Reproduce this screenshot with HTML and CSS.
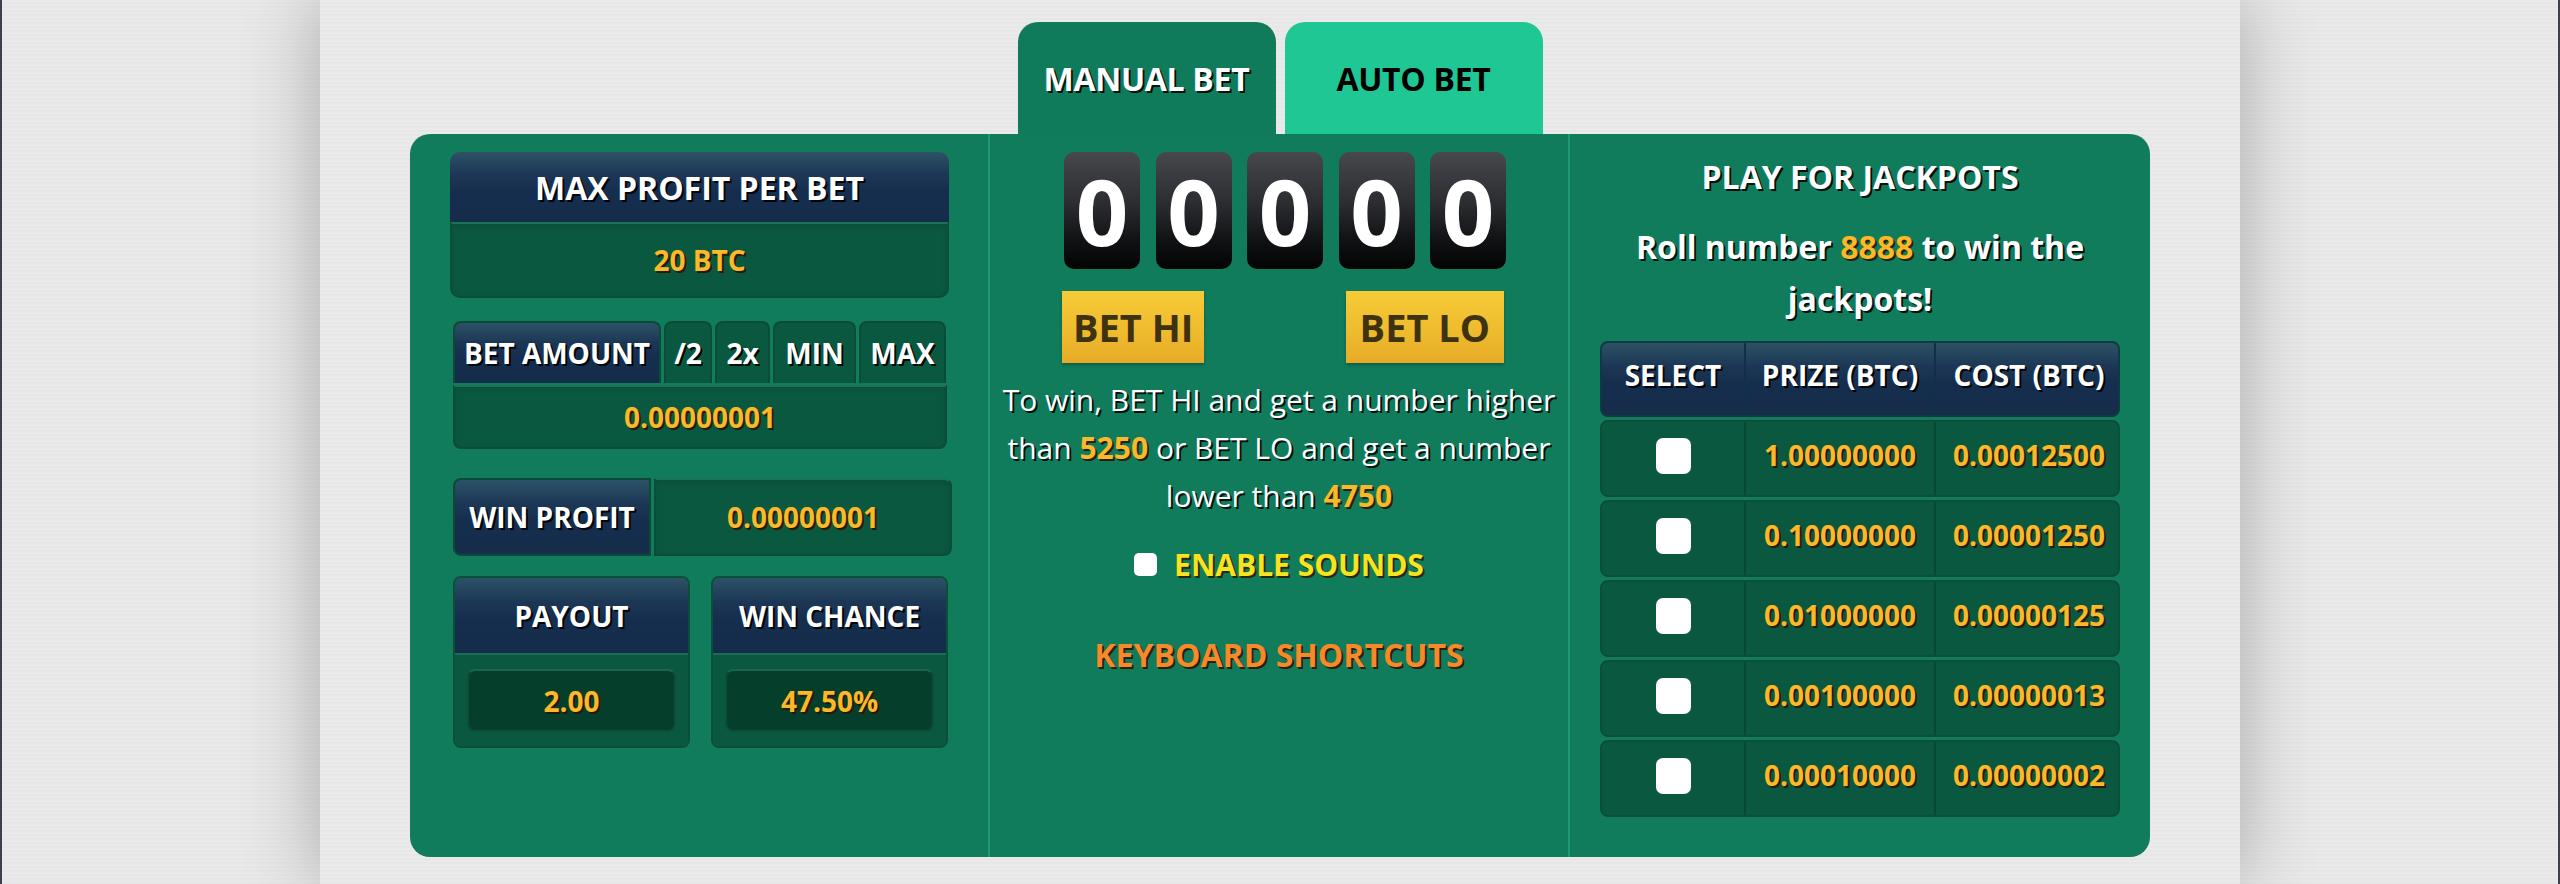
FILE: index.html
```html
<!DOCTYPE html>
<html lang="en">
<head>
<meta charset="utf-8">
<title>Dice - Manual Bet</title>
<link rel="stylesheet" href="styles.css">
</head>
<body>
<div class="frame">
  <div class="page">
    <div class="game">
      <div class="tabs">
        <div class="tab tab-active">MANUAL BET</div>
        <div class="tab tab-auto">AUTO BET</div>
      </div>
      <div class="panel">
        <div class="col col-left">
          <div class="card card-max">
            <div class="hdr hdr-max">MAX PROFIT PER BET</div>
            <div class="val val-max">20 BTC</div>
          </div>
          <div class="betamount">
            <div class="ba-top">
              <div class="hdr ba-label">BET AMOUNT</div>
              <div class="btn-sm btn-half">/2</div>
              <div class="btn-sm btn-double">2x</div>
              <div class="btn-sm btn-min">MIN</div>
              <div class="btn-sm btn-max">MAX</div>
            </div>
            <div class="val ba-val">0.00000001</div>
          </div>
          <div class="winprofit">
            <div class="hdr wp-label">WIN PROFIT</div>
            <div class="val wp-val">0.00000001</div>
          </div>
          <div class="stats">
            <div class="stat">
              <div class="hdr stat-hdr">PAYOUT</div>
              <div class="stat-body"><div class="stat-val">2.00</div></div>
            </div>
            <div class="stat">
              <div class="hdr stat-hdr">WIN CHANCE</div>
              <div class="stat-body"><div class="stat-val">47.50%</div></div>
            </div>
          </div>
        </div>
        <div class="col col-mid">
          <div class="reels">
            <div class="reel">0</div>
            <div class="reel">0</div>
            <div class="reel">0</div>
            <div class="reel">0</div>
            <div class="reel">0</div>
          </div>
          <div class="betbtns">
            <div class="betbtn">BET HI</div>
            <div class="betbtn betbtn-lo">BET LO</div>
          </div>
          <p class="rules">To win, BET HI and get a number higher than <span class="num">5250</span> or BET LO and get a number lower than <span class="num">4750</span></p>
          <label class="sounds"><input type="checkbox" class="chk-sm"><span>ENABLE SOUNDS</span></label>
          <div class="shortcuts">KEYBOARD SHORTCUTS</div>
        </div>
        <div class="col col-right">
          <div class="jp-title">PLAY FOR JACKPOTS</div>
          <div class="jp-desc">Roll number <span class="num">8888</span> to win the jackpots!</div>
          <div class="jp-table">
            <div class="jp-row jp-head">
              <div class="jp-cell">SELECT</div>
              <div class="jp-cell">PRIZE (BTC)</div>
              <div class="jp-cell">COST (BTC)</div>
            </div>
            <div class="jp-row">
              <div class="jp-cell"><input type="checkbox" class="chk-lg"></div>
              <div class="jp-cell num">1.00000000</div>
              <div class="jp-cell num">0.00012500</div>
            </div>
            <div class="jp-row">
              <div class="jp-cell"><input type="checkbox" class="chk-lg"></div>
              <div class="jp-cell num">0.10000000</div>
              <div class="jp-cell num">0.00001250</div>
            </div>
            <div class="jp-row">
              <div class="jp-cell"><input type="checkbox" class="chk-lg"></div>
              <div class="jp-cell num">0.01000000</div>
              <div class="jp-cell num">0.00000125</div>
            </div>
            <div class="jp-row">
              <div class="jp-cell"><input type="checkbox" class="chk-lg"></div>
              <div class="jp-cell num">0.00100000</div>
              <div class="jp-cell num">0.00000013</div>
            </div>
            <div class="jp-row">
              <div class="jp-cell"><input type="checkbox" class="chk-lg"></div>
              <div class="jp-cell num">0.00010000</div>
              <div class="jp-cell num">0.00000002</div>
            </div>
          </div>
        </div>
      </div>
    </div>
  </div>
</div>
</body>
</html>
```
FILE: styles.css
```css
* { box-sizing: border-box; }

html, body {
  margin: 0;
  padding: 0;
  height: 884px;
  overflow: hidden;
}

body {
  background: #3b4148;
  font-family: "Open Sans", "Liberation Sans", sans-serif;
  color: #fff;
}

.frame {
  margin: 0 2px;
  height: 884px;
  background: repeating-linear-gradient(to bottom, #e9e9e9 0 2px, #e6e6e6 2px 4px);
  overflow: hidden;
}

.page {
  width: 1920px;
  height: 884px;
  margin: 0 auto;
  padding-top: 22px;
  background: repeating-linear-gradient(to bottom, #eaeaea 0 2px, #e7e7e7 2px 4px);
  box-shadow: 0 0 70px rgba(0, 0, 0, 0.28);
}

.game {
  width: 1740px;
  margin: 0 auto;
}

/* Tabs */
.tabs {
  display: flex;
  justify-content: center;
  gap: 9px;
}

.tab {
  width: 258px;
  height: 112px;
  border-radius: 20px 20px 0 0;
  display: flex;
  align-items: center;
  justify-content: center;
  font-size: 32px;
  font-weight: 700;
  letter-spacing: -0.3px;
}

.tab-active {
  background: #107b5b;
  color: #fff;
  text-shadow: 2px 2px 0 rgba(0, 0, 0, 0.85);
}

.tab-auto {
  background: #1fc794;
  color: #000;
}

/* Panel */
.panel {
  height: 723px;
  background: #107c5c;
  border-radius: 20px;
  display: grid;
  grid-template-columns: 580px 580px 580px;
}

.col {
  padding-top: 18px;
}

.col-left, .col-mid {
  border-right: 2px solid #1c9a70;
}

/* shared pieces */
.hdr {
  background: linear-gradient(to bottom, #2c5266 0%, #1c3755 32%, #162e4d 55%, #152c4b 100%);
  color: #fff;
  font-weight: 700;
  font-size: 28px;
  display: flex;
  align-items: center;
  justify-content: center;
  text-shadow: 2px 2px 0 rgba(0, 0, 0, 0.9);
  white-space: nowrap;
}

.val {
  background: #0b5840;
  color: #fbb829;
  font-weight: 700;
  font-size: 28px;
  display: flex;
  align-items: center;
  justify-content: center;
  text-shadow: 2px 2px 0 rgba(40, 20, 0, 0.9);
  border: 2px solid #0a4d38;
  border-top-color: #1a7257;
  box-shadow: inset 0 2px 6px rgba(0, 0, 0, 0.12);
}

.num {
  color: #fbb829;
}

/* left column */
.col-left {
  padding-left: 40px;
  padding-right: 40px;
}

.card-max {
  width: 499px;
}

.hdr-max {
  height: 70px;
  font-size: 32px;
  border-radius: 10px 10px 0 0;
}

.val-max {
  height: 76px;
  border-radius: 0 0 10px 10px;
}

.betamount {
  width: 494px;
  margin: 23px 0 0 3px;
}

.ba-top {
  display: flex;
  gap: 3px;
  height: 62px;
}

.ba-label {
  width: 208px;
  border-radius: 8px 8px 0 0;
  border: 2px solid #0b4a36;
  border-bottom: none;
}

.btn-sm {
  background: #0b5840;
  border: 2px solid #0a4c37;
  border-bottom: none;
  border-radius: 8px 8px 0 0;
  display: flex;
  align-items: center;
  justify-content: center;
  font-size: 28px;
  font-weight: 700;
  text-shadow: 2px 2px 0 rgba(0, 0, 0, 0.9);
}

.btn-half { width: 48px; }
.btn-double { width: 55px; }
.btn-min { width: 83px; }
.btn-max { width: 87px; }

.ba-val {
  margin-top: 2px;
  height: 64px;
  border-radius: 0 0 8px 8px;
}

.winprofit {
  display: flex;
  gap: 3px;
  height: 78px;
  margin: 29px 0 0 3px;
  width: 499px;
}

.wp-label {
  width: 198px;
  border-radius: 8px 0 0 8px;
  border: 2px solid #0b4a36;
}

.wp-val {
  flex: 1;
  border-radius: 0 8px 8px 0;
}

.stats {
  display: flex;
  gap: 21px;
  margin: 20px 0 0 3px;
}

.stat {
  width: 238px;
  border-radius: 8px;
  border: 2px solid #0b4f39;
  overflow: hidden;
}

.stat-hdr {
  height: 77px;
  border-bottom: 2px solid #1a6c52;
}

.stat-body {
  background: #0b5840;
  padding: 14px 12px 14px;
}

.stat-val {
  height: 63px;
  background: #063e2c;
  border: 2px solid #0a4f39;
  border-top-color: #19654d;
  border-radius: 8px;
  color: #fbb829;
  font-weight: 700;
  font-size: 28px;
  display: flex;
  align-items: center;
  justify-content: center;
  text-shadow: 2px 2px 0 rgba(40, 20, 0, 0.9);
}

/* middle column */
.col-mid {
  text-align: center;
}

.reels {
  display: flex;
  gap: 15.5px;
  width: 442px;
  margin-left: 74px;
}

.reel {
  width: 76px;
  height: 117px;
  border-radius: 10px;
  background: linear-gradient(to bottom, #46484d 0%, #2a2c30 45%, #111214 75%, #030303 100%);
  color: #fff;
  font-size: 92px;
  font-weight: 700;
  line-height: 117px;
  text-align: center;
}

.betbtns {
  display: flex;
  justify-content: space-between;
  width: 442px;
  margin: 22px 0 0 72px;
}

.betbtn {
  height: 72px;
  padding: 0 11px;
  background: linear-gradient(to bottom, #f6cb36 0%, #efbd2f 50%, #e7ab27 100%);
  color: #3e3210;
  font-size: 38px;
  font-weight: 700;
  line-height: 72px;
  box-shadow: 0 2px 3px rgba(0, 0, 0, 0.25);
}

.betbtn-lo {
  padding: 0 14px;
}

.rules {
  margin: 13px 0 0;
  padding: 0 8px;
  font-size: 30px;
  line-height: 48px;
  color: #fff;
  text-shadow: 2px 2px 0 rgba(0, 0, 0, 0.85);
}

.rules .num {
  font-weight: 700;
  text-shadow: 2px 2px 0 rgba(40, 20, 0, 0.9);
}

.sounds {
  display: flex;
  align-items: center;
  justify-content: center;
  gap: 17px;
  height: 48px;
  margin-top: 20px;
  color: #f9e21f;
  font-size: 30px;
  font-weight: 700;
  text-shadow: 2px 2px 0 rgba(40, 30, 0, 0.9);
}

.chk-sm {
  appearance: none;
  -webkit-appearance: none;
  margin: 0;
  width: 23px;
  height: 23px;
  border-radius: 5px;
  background: #fff;
}

.shortcuts {
  margin-top: 43px;
  line-height: 48px;
  color: #f7892b;
  font-size: 32px;
  font-weight: 700;
  text-shadow: 2px 2px 0 rgba(40, 20, 0, 0.9);
}

/* right column */
.col-right {
  text-align: center;
  padding-top: 19px;
}

.jp-title {
  font-size: 32px;
  font-weight: 700;
  line-height: 48px;
  text-shadow: 2px 2px 0 rgba(0, 0, 0, 0.85);
}

.jp-desc {
  margin: 20px auto 0;
  width: 470px;
  font-size: 32px;
  font-weight: 700;
  line-height: 52px;
  text-shadow: 2px 2px 0 rgba(0, 0, 0, 0.85);
}

.jp-desc .num {
  text-shadow: 2px 2px 0 rgba(40, 20, 0, 0.9);
}

.jp-table {
  width: 520px;
  margin: 16px auto 0;
  display: flex;
  flex-direction: column;
  gap: 3px;
}

.jp-row {
  display: grid;
  grid-template-columns: 142px 190px 188px;
  height: 77px;
  border-radius: 8px;
  background: #0b5840;
  border: 2px solid #0a4f39;
  overflow: hidden;
}

.jp-head {
  height: 76px;
  background: linear-gradient(to bottom, #2c5266 0%, #1c3755 32%, #162e4d 55%, #152c4b 100%);
  border-color: #0e3a40;
}

.jp-cell {
  display: flex;
  align-items: center;
  justify-content: center;
  font-size: 28px;
  font-weight: 700;
  white-space: nowrap;
  text-shadow: 2px 2px 0 rgba(40, 20, 0, 0.9);
}

.jp-head .jp-cell {
  color: #fff;
  padding-bottom: 8px;
  text-shadow: 2px 2px 0 rgba(0, 0, 0, 0.9);
}

.jp-cell + .jp-cell {
  border-left: 2px solid #094833;
}

.jp-head .jp-cell + .jp-cell {
  border-left-color: #10304a;
}

.jp-row .num {
  padding-bottom: 8px;
}

.chk-lg {
  appearance: none;
  -webkit-appearance: none;
  margin: 0 0 6px;
  width: 35px;
  height: 36px;
  border-radius: 7px;
  background: #fff;
}
```
